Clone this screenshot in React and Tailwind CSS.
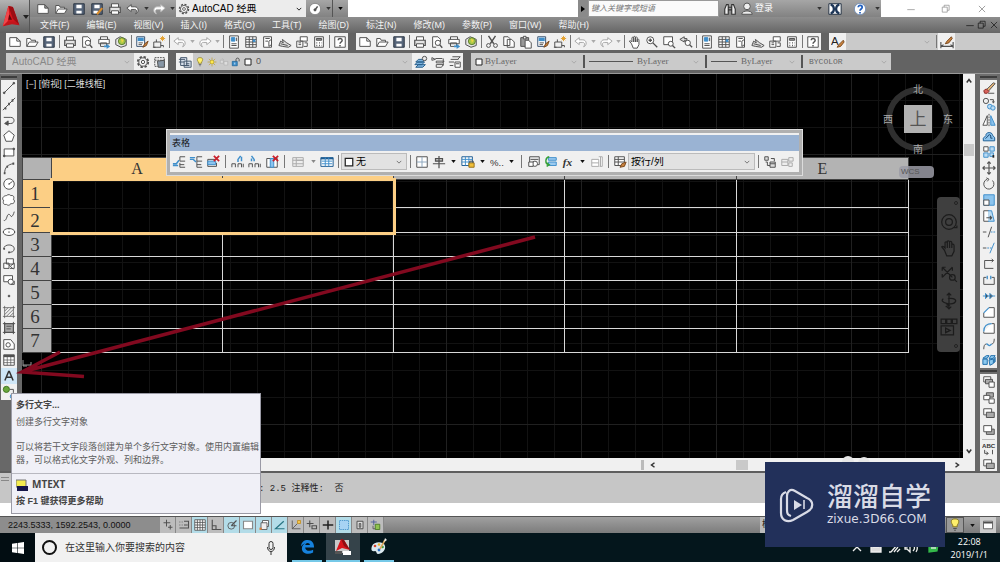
import React from 'react';

const B = '#3f8fcb';
const K = '#505050';

const ICONS = {
  new: <path d="M2 3h8l4 4v6H2zM10 3v4h4" fill="#fff" />,
  open: <path d="M2 13V4h4l1 2h5v2M2 13l3-5h10l-3 5z" fill="#fff" />,
  save: <><path d="M2 2h12v12H2z" fill="#56657a" stroke="#2b3442" /><path d="M5 3h6v4H5zM5 10h6v3H5z" fill="#fff" stroke="none" /></>,
  saveAs: <><path d="M2 2h12v12H2z" fill="#56657a" stroke="#2b3442" /><path d="M5 3h6v4H5zM4 10h5v3H4z" fill="#fff" stroke="none" /><path d="M8 14l6-7" stroke="#d98c2b" strokeWidth="2.4" /></>,
  print: <><path d="M4 6V2h8v4" fill="#fff" /><path d="M2 6h12v6H2z" fill="#e4e4e4" strokeWidth="1.4" /><path d="M4 10h8v4H4z" fill="#fff" /></>,
  preview: <><path d="M3 14V2h6l3 3v3M3 14h4" fill="#fff" /><circle cx="9" cy="9" r="3" /><path d="M11 11l3 3.500" strokeWidth="1.600" /></>,
  publish: <><path d="M4 5V2h8v3M2 5h12v5H2zM4 9h7v4H4z" fill="#fff" /><path d="M8 12h3v-2l4 3-4 3v-2H8z" fill={B} stroke="none" /></>,
  globe: <><path d="M2 5l5-3 7 3v7l-6 2-6-3z" fill="#e5e5e5" /><circle cx="9" cy="7" r="4" fill="#a9c94a" stroke="#5a7a30" /><path d="M8 4l3 2-2 3z" fill="#f4d642" stroke="none" /></>,
  match: <><path d="M2 2h9v11H2z" fill="#fff" stroke="#37506e" /><path d="M3 3h7v4H3z" fill={B} stroke="none" /><path d="M4 9h5M4 11h4" /><path d="M9 14l2-4 4-3-2 5z" fill="#c9823d" stroke="#7b4a1f" /></>,
  block: <><path d="M2 8h8v6H2zM5 8V5M1 14h3M10 12h3v2" /><path d="M12 1v6M9 4h6M10 2l4 4M14 2l-4 4" stroke="#e3a02f" /></>,
  undo: <path d="M1 7l5-4v2.500h4c5 0 5 7 1 8 2-3 1-5-1-5H6V11z" fill="#fff" />,
  redo: <path d="M15 7l-5-4v2.500H6c-5 0-5 7-1 8-2-3-1-5 1-5h4V11z" fill="#fff" />,
  props: <><path d="M3 1h10v14H3z" fill="#fff" /><path d="M5 3h4v4H5z" fill={B} stroke={B} /><path d="M5 10h6M5 12h6M11 3v4" /></>,
  center: <><path d="M2 2h12v12H2z" fill="#fff" /><path d="M2 5h12M6 2v12M10 2v12M2 8h12M2 11h12" /><path d="M10 5h3v3h-3z" fill={B} stroke="none" /></>,
  palette: <><path d="M3 2h9v12H3z" fill="#fff" /><path d="M5 4h5M5 7h3M9 7l3-2v6l-3 2z" /></>,
  sheet: <path d="M1 12l2-5 3 2-1-4 5 4 5 3-3 2-7-1zM3 10l8 2" fill="#ddd" />,
  markup: <path d="M6 2h8v5H6zM2 7h7v7H2zM11 9h3v4h-4M4 9h3M4 11h3" fill="#fff" />,
  calc: <><path d="M3 2h10v12H3z" fill="#fff" /><path d="M5 4h6v2H5z" fill="#999" /><path d="M5 9h1M8 9h1M11 9h.5M5 12h1M8 12h1M11 12h.5" strokeWidth="1.500" /></>,
  help: <><path d="M2 2h12v12H2z" fill="#fff" /><path d="M6 6c0-3 4.500-2.500 4.500 0C10.500 8 8 8 8 10M8 11.500v1.500" strokeWidth="1.600" /></>,
  cut: <><path d="M4 1l6 9M12 1L6 10" strokeWidth="1.600" /><circle cx="4" cy="12" r="2.200" /><circle cx="12" cy="12" r="2.200" /></>,
  copy: <path d="M2 2h5l2 2v8H2zM6 5h5l3 3v6H6z" fill="#fff" />,
  paste: <><path d="M2 3h9v10H2z" fill="#999" /><path d="M5 1.500h3v3H5z" fill="#eee" /><path d="M7 6h4l3 3v6H7z" fill="#fff" /></>,
  hand: <path d="M4 10L1.500 7c1-1 2 0 3 1V3c1-1 2 0 2 1v4-6c1-1 2 0 2 1v5-5.500c1-1 2 0 2 1V8 5c1-1 2 0 2 1v5l-2 4H6z" fill="#fff" />,
  navHand: <path d="M4 10L1.500 7c1-1 2 0 3 1V3c1-1 2 0 2 1v4-6c1-1 2 0 2 1v5-5.500c1-1 2 0 2 1V8 5c1-1 2 0 2 1v5l-2 4H6z" />,
  zoomRt: <><circle cx="6" cy="6" r="4" fill="#fff" /><path d="M9 9l5 5M4 6h4M6 4v4" strokeWidth="1.500" /></>,
  zoomWin: <><path d="M2 2h10v9H2z" fill="#fff" /><circle cx="10" cy="10" r="2.800" fill="#fff" /><path d="M12 12l3 3" strokeWidth="1.600" /></>,
  zoomPrev: <><path d="M6 2L1 5l5 3V6h3V4H6z" fill="#ddd" /><circle cx="10" cy="9" r="3" fill="#fff" /><path d="M12 11l3 3" strokeWidth="1.600" /></>,
  gear: <><circle cx="8" cy="8" r="6" strokeWidth="2" strokeDasharray="2.700 2" /><circle cx="8" cy="8" r="4.800" fill="#f4f4f4" /><circle cx="8" cy="8" r="1.900" /></>,
  wsave: <><path d="M2 3h11v10H2zM2 6h11" strokeDasharray="2 1" /><path d="M5 7l8-1v8H6z" fill="#8796a5" /></>,
  layers: <path d="M3 3h7v9H3zM7 7h8v7H7zM1 5h7M1 8h6M9 10h4M9 12h4" fill="#d6dfea" stroke="#44566b" />,
  bulb: <><path d="M8 1c-6 0-4.500 5-2.500 7v2h5V8C12.500 6 14 1 8 1z" fill="#fff06b" stroke="#8a7a1d" /><path d="M6 12h4M7 14h2" /></>,
  sun: <><circle cx="8" cy="8" r="3.300" fill="#ffe94f" stroke="#a58a13" /><path d="M8 1v2M8 13v2M1 8h2M13 8h2M3 3l1.500 1.500M11.500 11.500L13 13M13 3l-1.500 1.500M4.500 11.500L3 13" stroke="#bd9513" /></>,
  freeze: <path d="M2 5h5v5H2zM8 7h6v6H8zM5 2l3 3" stroke="#b0b0b0" fill="#ddd" />,
  lock: <><path d="M2 7h8v7H2z" fill={B} stroke="#185e94" /><path d="M8 7V4c0-3 5-3 5 0v3" strokeWidth="1.500" /><path d="M6 9v3" stroke="#fff" /></>,
  square: <path d="M2 2h12v12H2z" fill="#fff" stroke="#222" strokeWidth="2" />,
  layMake: <><path d="M1 11l3-3h8l-3 3zM2 14l3-3h8l-3 3zM2 8l3-3h8l-3 3z" fill="#7db4df" stroke="#275e8a" /><circle cx="12" cy="4" r="2.500" fill="#e9e9e9" /></>,
  layPrev: <path d="M1 3l4 2-4 1zM5 4h8M6 7h9l-2 2H6zM6 11h8l-2 3H6zM14 4v8" fill="#fff" />,
  layState: <path d="M5 2h9M3 5h9M1 8h6M2 12h4M8 8h6v6H8zM9 10h4M14 2l-3 3" fill="#fff" />,
  tstyle: <><text x="0" y="11" fontSize="13" fill="#222" stroke="none" fontFamily="Liberation Sans">A</text><path d="M7 14l2-3 5-5 1 2-4 5z" fill="#c9823d" stroke="#7b4a1f" /></>,
  dimstyle: <><path d="M1 8v7M15 8v7M1 13h14M1 13l3-2M15 13l-3-2" strokeWidth="1.300" /><path d="M6 10l2-3 5-5 1 2-4 5z" fill="#c9823d" stroke="#7b4a1f" /></>,
  line: <><path d="M2.500 13.500l11-11" /><circle cx="2.500" cy="13.500" r="1" fill={K} /><circle cx="13.500" cy="2.500" r="1" fill={K} /></>,
  xline: <><path d="M1 15L15 1" /><path d="M3 13h2M7 8h2M11 4h2" strokeWidth="2.600" /></>,
  pline: <><path d="M2 5h8c5 0 5 7 0 7H6" /><path d="M7 9l-4 3 4 2z" fill={K} /></>,
  polygon: <path d="M8 2l6 5-2.500 7h-7L2 7z" fill="#fff" />,
  rect: <><path d="M2.500 4.500h11v8h-11z" fill="#fff" /><circle cx="2.500" cy="12.500" r="1" fill={K} /><circle cx="13.500" cy="4.500" r="1" fill={K} /></>,
  arc: <><path d="M3 14C3 7 7 4 13 3" /><path d="M2 14h2M5 6.500h2M12 3h2" strokeWidth="2.400" /></>,
  circle: <><circle cx="8" cy="8" r="6" fill="#fff" /><path d="M8 8l4-3M7 8h2" /></>,
  cloud: <path d="M5 3c2-2 5-1 5 0 4-1 4 3 3 4 3 3 0 6-3 5-1 3-4 2-5 1-4 1-4-3-3-4-3-3 0-6 3-6z" fill="#fff" />,
  spline: <path d="M2 13c2 1 3-2 4-5s3-2 4 0 3-1 4-5" />,
  ellipse: <><ellipse cx="8" cy="8" rx="6.500" ry="4" fill="#fff" /><path d="M7.500 4h1M7.500 8h1M14 8h1M1 8h1" strokeWidth="2" /></>,
  ellArc: <><path d="M2 9c0-6 12-6 12 0 0 3-3 4-6 4" /><path d="M7 13h2M1.500 9h2" strokeWidth="2" /></>,
  insert: <path d="M5 2h8v6H5zM2 7h6v6H2zM10 10l4-3v6h-5M8 9l5 5" fill="#fff" />,
  mkBlock: <><path d="M2 3h10v7H2z" fill="#fff" /><circle cx="10" cy="10" r="3" fill="#fff" /><path d="M10 13h4V9" /></>,
  point: <circle cx="8" cy="8" r="1" fill={K} />,
  hatch: <path d="M3 1v14M13 1v14M1 3h14M1 13h14M3 7l4-4M3 11l8-8M5 13l8-8M9 13l4-4" strokeWidth=".8" />,
  gradient: <><path d="M3 3h10v10H3z" fill="#aaa" /><path d="M3 1v14M13 1v14M1 3h14M1 13h14M5 6h6M5 9h5" /></>,
  region: <><path d="M2 3h8l4 5v6H2z" fill="#fff" /><circle cx="7" cy="9" r="2.500" /></>,
  table: <><path d="M2 2h12v12H2z" fill="#fff" /><path d="M2 3.500h12" strokeWidth="2.500" /><path d="M6 4v10M10 4v10M2 8h12M2 11h12" strokeWidth=".8" /></>,
  mtext: <path d="M2.500 14L7.500 2h1l5 12M4.500 9.500h7" stroke="#333" strokeWidth="2" />,
  addSel: <><circle cx="5" cy="5" r="3.500" fill="#69a83b" stroke="#3f7420" /><circle cx="12" cy="13" r="2.500" fill="#8cb7e6" stroke={B} /><path d="M9 5h4v4" /></>,
  erase: <><path d="M4 11l9-9 2 1-8 9z" fill="#e9b778" /><path d="M2 11l3-2 3 3-2 2H3z" fill="#d9635c" stroke="#8d2d28" /><path d="M7 14h7" /></>,
  copyObj: <><circle cx="4.500" cy="4.500" r="3" /><path d="M9 3h4v3M12 5l1 2 1-2" /><circle cx="9" cy="11" r="2.700" fill="#bcdcf3" stroke={B} /><circle cx="12.500" cy="12.500" r="2.500" fill="#bcdcf3" stroke={B} /></>,
  mirror: <><path d="M6 3v11H1z" fill="#fff" /><path d="M10 3v11h5z" fill="#8cc4ee" stroke={B} /><path d="M8 1v14" strokeDasharray="2 1" /></>,
  offset: <><path d="M1.500 13.500v-3l3-3C4 3 12 3 12 7l2.500 3v3.500z" fill="#8cc4ee" stroke="#1c5d94" /><path d="M4 11l3-3c0-2 3-2 3 0v2.500h2" stroke="#1c4a74" /></>,
  array: <><path d="M2 2h5v5H2z" fill="#fff" /><path d="M9 2h5v5H9zM2 9h5v5H2zM9 9h4v4H9z" fill="#bcdcf3" stroke={B} /><path d="M12 13h2" stroke="#222" strokeWidth="3" /></>,
  move: <path d="M8 1v14M1 8h14M6 3l2-2 2 2M6 13l2 2 2-2M3 6L1 8l2 2M13 6l2 2-2 2" strokeWidth="1.300" />,
  rotate: <><path d="M12 4a5.800 5.800 0 1 1-6-1.500" /><path d="M5 1l3 1.500L6 5" /></>,
  scale: <><path d="M2 2h12v12H2z" fill="#8cc4ee" stroke={B} /><path d="M2 8h6v6H2z" fill="#fff" /></>,
  stretch: <><path d="M2 2h6v12H2z" fill="#fff" /><path d="M7 2h4l3 12H7" fill="#bcdcf3" stroke={B} /><path d="M5 10h6M9 8l2 2-2 2" strokeWidth="1.300" /></>,
  trim: <><path d="M1 8h4M7 14l4-12" /><path d="M10 8h5" stroke={B} strokeDasharray="2 1" /></>,
  extend: <><path d="M1 8h4" /><path d="M6 8h5" stroke={B} strokeDasharray="2 1" /><path d="M9 14l5-12" stroke={B} /></>,
  breakPt: <path d="M13 13H3V4h10M11 2l2 2-2 2" />,
  brk: <><path d="M2 5h3M11 5h3v8H2V5" /><path d="M6 3v4M10 3v4" stroke={B} strokeWidth="1.500" /></>,
  join: <><path d="M1 8h14" stroke={B} /><path d="M4 5l3 3-3 3zM9 5l3 3-3 3z" fill={K} stroke={B} /></>,
  chamfer: <><path d="M2 9v5h12V3H8" fill="#fff" /><path d="M2 9l6-6" stroke={B} strokeWidth="1.500" /></>,
  fillet: <><path d="M2 12v2h12V3h-3" fill="#fff" /><path d="M2 12c0-6 4-9 9-9" stroke={B} strokeWidth="1.500" /></>,
  blend: <><path d="M2 14c0-4 1-6 3-6M11 8c2 0 3-2 3-6" /><path d="M5 8c3 0 2 4 6 0" stroke={B} strokeWidth="1.500" /></>,
  explode: <path d="M1 6l4-3h3l-2 3zM1 7h5v6H1zM8 7l2-4h5l-2 3zM8 8l5-1v5l-4 2zM14 6l1-1v5l-1 1z" fill="#8cc9ef" stroke="#1d6dab" />,
  order1: <><path d="M2 2h8v6H2z" fill="#fff" /><path d="M4 5h8v5H4z" fill="#aaa" /><path d="M8 8h6v6H8z" fill="#fff" /></>,
  order2: <><path d="M5 2h8v5H5z" fill="#aaa" /><path d="M2 5h7v5H2z" fill="#fff" /><path d="M8 9h6v5H8z" fill="#fff" /></>,
  order3: <><path d="M2 2h9v7H2z" fill="#fff" /><path d="M5 6h9v6H5z" fill="#aaa" /></>,
  order4: <><path d="M5 7h9v6H5z" fill="#aaa" /><path d="M2 3h9v7H2z" fill="#fff" /></>,
  abc: <><text x="0" y="7" fontSize="7" fontWeight="bold" fill="#333" stroke="none" fontFamily="Liberation Sans">ABC</text><path d="M3 9v4h4M12 9v5M5 11l2 2-2 2" /></>,
  rowAbove: <><path d="M9 2h6M9 7h6M9 14h6M9 2v5M9 9v5M9 11h5" /><path d="M1 10h4l3-4M1 12h6" stroke={B} strokeWidth="1.700" /></>,
  rowBelow: <><path d="M9 2h6M9 7h6M9 14h6M9 2v12M9 11h5" /><path d="M1 5h4l3 3M1 3h6" stroke={B} strokeWidth="1.700" /></>,
  rowDel: <><path d="M2 5h9M2 13h10M2 5v8M12 9v4" /><path d="M2 7h9v4H2z" fill="#8cc4ee" stroke={B} /><path d="M9 1l6 6M15 1L9 7" stroke="#c8202b" strokeWidth="2" /></>,
  colLeft: <><path d="M1 14v-4h4v4M8 14v-4h4v4M14 10v4" /><path d="M8 8V5l3-4M12 2v5" stroke={B} strokeWidth="1.700" /></>,
  colRight: <><path d="M1 14v-4h4v4M8 14v-4h4v4M14 10v4" /><path d="M7 7V5L4 1M4 4v3" stroke={B} strokeWidth="1.700" /></>,
  colDel: <><path d="M2 4h12v10H2z" fill="#fff" /><path d="M6 4h4v10H6z" fill="#8cc4ee" stroke={B} /><path d="M9 1l6 6M15 1L9 7" stroke="#c8202b" strokeWidth="2" /></>,
  merge: <path d="M2 3h12v10H2zM2 6h12M2 10h12M6 3v10M6 6h8" fill="#eee" />,
  unmerge: <><path d="M1 3h14v10H1z" fill="#fff" stroke="#1d5c92" /><path d="M1 4h14" stroke="#1d5c92" strokeWidth="2" /><path d="M6 3v10M10 3v10M2 7h12M2 10h12" stroke={B} /></>,
  borders: <><path d="M2 2h12v12H2z" fill="#fff" /><path d="M8 2v12M2 8h12" stroke="#8ba5bd" /></>,
  align: <path d="M1 10h14M8 1v14M4 4h8v3H4z" fill="#bbb" strokeWidth="1.400" />,
  locked: <><path d="M1 2h12v10H1z" fill="#fff" stroke="#1d5c92" /><path d="M1 5h12M5 2v10M9 2v10M1 8h12" stroke={B} /><path d="M9 9h6v5H9z" fill="#f1bf38" stroke="#99711b" /><path d="M10 9V7h4v2" /></>,
  percent: <text x="0" y="12" fontSize="11" fill="#333" stroke="none" fontFamily="Liberation Sans">%..</text>,
  blockIn: <><path d="M3 9V2h11v9h-3M4 5h9" /><circle cx="9" cy="10" r="3" fill="#fff" /><path d="M2 8h5v5H2z" fill="#fff" /></>,
  field: <><path d="M5 3h9v3H5zM5 8h9v4H5z" fill="#9bcaf0" stroke={B} /><path d="M6 2C1 3 1 10 5 11M3 9l3 2-3 2" stroke="#35a037" strokeWidth="1.600" /></>,
  fx: <text x="2" y="12" fontSize="13" fontStyle="italic" fontWeight="bold" fill="#333" stroke="none" fontFamily="Liberation Serif">fx</text>,
  manage: <path d="M2 5h8v8H2zM2 9h8M12 2v11M10 2h4v11h-3" fill="#fff" />,
  tmatch: <><path d="M2 2h11v10H2zM2 5h11M6 2v10M2 8h11" fill="#fff" /><path d="M8 14l2-4 5-2-2 5z" fill="#c9823d" stroke="#7b4a1f" /></>,
  link: <path d="M2 2h4v4H2zM3 8h2v4h3M9 4h4v3M8 8h6v6H8zM8 10h6" fill="#ddd" />,
  dl: <path d="M2 5h7v7H2zM2 8h7M10 3h5v4h-5zM10 9h4v4h-4z" fill="#eee" />,
  infer: <path d="M6 1v9M2 5h9M8 11h6M11 8v6" strokeWidth="1.300" />,
  snap: <path d="M2 4h1M5 4h1M2 8h1M5 8h1M8 3h6v9H2M8 8h5" strokeWidth="1.400" />,
  grid: <><path d="M1 1h14v14H1z" fill="#fff" /><path d="M1 4.500h14M1 8h14M1 11.500h14M4.500 1v14M8 1v14M11.500 1v14" /></>,
  ortho: <path d="M3 1v13h12M3 9h5v5" strokeWidth="1.500" />,
  polar: <><circle cx="7" cy="9" r="4.500" /><path d="M7 9l7-7M7 9h7" strokeWidth="1.500" /></>,
  osnap: <path d="M2 3h12v10H2z" fill="#fff" stroke="#888" strokeWidth="1.500" />,
  osnap3: <><path d="M6 2h8v8H6z" fill="#fff" /><path d="M4 5h8v9H4z" fill="#eee" /><path d="M2 13h3" stroke="#d87b34" strokeWidth="3" /></>,
  otrack: <path d="M13 3L2 13h12" stroke="#277482" strokeWidth="1.600" />,
  ducs: <><path d="M3 2v11h11M3 13l7-7" /><path d="M10 2h4v4h-4z" fill="#f2c64b" stroke="#c48e1e" /></>,
  dyn: <path d="M5 2v9M1 6h9M8 9h6v4H8z" strokeWidth="1.500" />,
  lwt: <path d="M8 2v12M1 8h14" stroke="#222" strokeWidth="2" />,
  tpy: <path d="M2 2h12v12H2z" fill="#a7d3f4" stroke={B} strokeDasharray="2 1" />,
  qp: <path d="M4 3h8v10H4zM7 6h2v5H7z" fill="#ddd" strokeWidth="1.300" />,
  sc: <><path d="M5 1v7M1 4h8" stroke="#45529b" /><path d="M7 7h6v7H7z" fill="#8fc250" stroke="#467720" /><path d="M4 9v4h3" /></>,
  binoc: <path d="M2 14V8l2-5h2v11zM10 14V3h2l2 5v6zM6 6h4M6 9h4" fill="#eee" stroke="#333" strokeWidth="1.300" />,
  user: <><circle cx="8" cy="5" r="3.800" fill="#eee" /><path d="M2 14c0-5 12-5 12 0z" fill="#eee" /></>,
  exch: <><path d="M1 2h14v12H1z" fill="#fff" stroke="#1e2d3f" /><path d="M3 3c5 1 5 9 0 10M13 3c-5 1-5 9 0 10" stroke="#1c3557" strokeWidth="2.600" /></>,
  qhelp: <><circle cx="8" cy="8" r="6.500" fill="#fff" stroke="#7791b5" /><path d="M6 6c0-3 4.500-2.500 4.500 0C10.500 8 8 8 8 10M8 11.500v1.500" stroke="#1f5fc0" strokeWidth="2" /></>,
  gauge: <><circle cx="8" cy="8" r="6.500" fill="#fff" stroke="#888" /><path d="M8 9l3-4" strokeWidth="1.700" /><circle cx="8" cy="9" r="1.200" fill={K} /></>,
  min: <path d="M2 9h12" />,
  max: <path d="M2 5h8v8H2zM5 5V2h8v8h-3" />,
  close: <path d="M3 3l10 10M13 3L3 13" />,
  wheel: <><circle cx="8" cy="8" r="6.500" /><circle cx="8" cy="8" r="3" /><path d="M12 13h3v-2" /></>,
  zoomAll: <><path d="M2 2l9 9M11 2L2 11M2 2h3M2 2v3M11 2v3M2 11v-3" /><circle cx="11" cy="11" r="2.500" /><path d="M13 13l2 2" /></>,
  orbit: <path d="M8 1v14M6 3l2-2 2 2M6 13l2 2 2-2M3 6c-5 3 9 7 11 2 0-2-4-3-7-2M5 10l3 2-3 1" />,
  motion: <path d="M1 1h4v4H1zM6 1h4v4H6zM11 1h4v4h-4zM1 7h11v8H1zM5 9l4 2-4 2z" />,
  page: <><path d="M2 3h12v10H2z" fill="#fff" /><path d="M2 5h12" strokeWidth="2" /></>,
};

function Icon({ n, size = 'size-3.5', color = K }) {
  return (
    <svg viewBox="0 0 16 16" className={`${size} shrink-0`} fill="none" stroke={color} strokeWidth="1.1" aria-hidden="true">
      {ICONS[n]}
    </svg>
  );
}

function Tool({ n, label, className = 'w-[17px]', size, color }) {
  return (
    <button type="button" aria-label={label || n} className={`flex shrink-0 items-center justify-center ${className}`}>
      <Icon n={n} size={size} color={color} />
    </button>
  );
}

function Drop({ className = 'w-2', color = '#333' }) {
  return (
    <button type="button" aria-label="展开" className={`flex shrink-0 items-center justify-center ${className}`}>
      <svg viewBox="0 0 6 4" className="h-[3px] w-[5px]" fill={color} aria-hidden="true"><path d="M0 0h6L3 4z" /></svg>
    </button>
  );
}

function Sep({ className = 'w-1' }) {
  return <span className={`flex shrink-0 justify-center py-0.5 ${className}`}><span className="w-px bg-[#777]" /></span>;
}

function Chevron({ color = '#aaa' }) {
  return <svg viewBox="0 0 8 5" className="pointer-events-none mr-1 h-1 w-1.5 shrink-0" fill="none" stroke={color} strokeWidth="1.3" aria-hidden="true"><path d="M1 1l3 3 3-3" /></svg>;
}

function Combo({ label, value, className = '', text = '', before, chevron }) {
  return (
    <label className={`flex items-center ${className}`}>
      {before}
      <select aria-label={label} className={`min-w-0 flex-1 appearance-none bg-transparent outline-none ${text}`} defaultValue={value}>
        <option>{value}</option>
      </select>
      <Chevron color={chevron} />
    </label>
  );
}

const STANDARD_A = ['new', 'open', 'save', '|', 'print', 'preview', 'publish', 'globe', '|'];
const STANDARD_Z = ['|', 'props', 'center', 'palette', 'sheet', 'markup', 'calc', '|', 'help'];
const UNDO = ['undo', 'v', 'redo', 'v'];
const BAR_1 = [...STANDARD_A, 'match', 'block', '|', ...UNDO, ...STANDARD_Z];
const BAR_2 = [...STANDARD_A, 'cut', 'copy', 'paste', 'match', 'block', '|', ...UNDO, '|', 'hand', 'zoomRt', 'zoomWin', 'zoomPrev', ...STANDARD_Z];

function Bar({ items }) {
  return (
    <div role="toolbar" className="flex shrink-0 bg-[#f0f0f0]">
      {items.map((n, i) => {
        if (n === '|') return <Sep key={i} />;
        if (n === 'v') return <Drop key={i} color="#aaa" />;
        return <Tool key={i} n={n} color={n === 'undo' || n === 'redo' ? '#a5a5a5' : K} />;
      })}
    </div>
  );
}

const MENUS = ['文件(F)', '编辑(E)', '视图(V)', '插入(I)', '格式(O)', '工具(T)', '绘图(D)', '标注(N)', '修改(M)', '参数(P)', '窗口(W)', '帮助(H)'];

function Header() {
  return (
    <header className="flex h-[33px] shrink-0 bg-white">
      <button type="button" aria-label="应用程序菜单" className="flex w-[30px] shrink-0 items-center justify-center border-r border-[#555] bg-linear-to-b from-[#b4b4b4] to-[#5f5f5f]">
        <svg viewBox="0 0 24 28" className="h-[26px] w-[22px]" aria-hidden="true">
          <path d="M8 2l5 1 7 20-8-3-10 4z" fill="#d3151c" />
          <path d="M8 2l5 1 7 20-7-7z" fill="#9c0e14" />
          <path d="M8 2L2 24l5-4 2-9z" fill="#f0464a" />
          <path d="M2 24l5-5h8l5 4-8-1z" fill="#c3141b" />
          <path d="M9 11l3 6H8z" fill="#5e080c" />
        </svg>
        <svg viewBox="0 0 6 4" className="h-1 w-1.5" fill="#222" aria-hidden="true"><path d="M0 0h6L3 4z" /></svg>
      </button>
      <div className="flex min-w-0 flex-1 flex-col">
        <div className="flex h-[17px] justify-between">
          <div className="flex shrink-0 bg-linear-to-b from-[#a6a6a6] to-[#828282] pl-1">
            {['new', 'open', 'save', 'saveAs', 'print', 'undo'].map((n) => <Tool key={n} n={n} className="w-[18px]" />)}
            <Drop />
            <Tool n="redo" color="#bbb" className="w-[18px]" />
            <Drop />
            <Combo label="工作空间" value="AutoCAD 经典" className="w-[130px] bg-[#ececec] pl-0.5" text="pl-0.5 text-[10px] leading-none text-black" before={<Icon n="gear" size="size-3" />} chevron="#222" />
            <Tool n="gauge" className="w-[18px]" />
            <Drop />
            <Drop className="w-4 border-l border-[#555]" color="#000" />
          </div>
          <div className="flex min-w-0">
            <button type="button" aria-label="展开搜索" className="flex w-2.5 items-center justify-center bg-[#8a8a8a]">
              <svg viewBox="0 0 4 6" className="h-1.5 w-1" aria-hidden="true"><path d="M0 0l4 3-4 3z" /></svg>
            </button>
            <input aria-label="搜索" placeholder="键入关键字或短语" className="w-[131px] border border-[#999] bg-[#fafafa] px-0.5 text-[8px] italic outline-none placeholder:text-[#777]" />
            <div className="flex w-[162px] items-center bg-linear-to-b from-[#a6a6a6] to-[#828282] pl-0.5">
              <Tool n="binoc" />
              <Tool n="user" />
              <button type="button" className="text-[9px] text-white">登录</button>
              <span className="flex-1" />
              <Drop />
              <Tool n="exch" className="w-6" />
              <Tool n="qhelp" className="w-[26px]" />
              <Drop />
            </div>
            <div className="flex w-[119px] items-center justify-around pl-3">
              <Tool n="min" label="最小化" size="size-2.5" color="#888" />
              <Tool n="max" label="还原" size="size-2.5" color="#888" />
              <Tool n="close" label="关闭" size="size-2.5" color="#777" />
            </div>
          </div>
        </div>
        <nav className="flex h-4 items-center bg-linear-to-b from-[#8d8d8d] to-[#666] pl-2.5">
          <div className="flex flex-1 gap-[17px]">
            {MENUS.map((m) => <button key={m} type="button" className="text-[9px] leading-none whitespace-nowrap text-[#f2f2f2]">{m}</button>)}
          </div>
          <Tool n="min" label="最小化图形" size="size-2.5" color="#111" className="w-3" />
          <Tool n="max" label="还原图形" size="size-2.5" color="#111" className="w-3" />
          <Tool n="close" label="关闭图形" size="size-2.5" color="#111" className="w-3" />
        </nav>
      </div>
    </header>
  );
}

function Toolbars() {
  const by = 'font-["Liberation_Serif",serif] text-[9px] text-[#666]';
  const sep = <span className="flex w-1.5 shrink-0 justify-center bg-[#cacaca] py-0.5"><span className="w-0.5 bg-[#555]" /></span>;
  return (
    <div className="shrink-0 bg-[#636363]">
      <div className="flex h-[17px] gap-2 pl-1.5">
        <Bar items={BAR_1} />
        <Bar items={BAR_2} />
        <div role="toolbar" className="flex flex-1 bg-[#cacaca]">
          <Tool n="tstyle" label="文字样式" className="w-[17px] bg-[#f0f0f0]" />
          <Combo label="文字样式列表" value=" " className="w-[88px]" />
          <Sep />
          <Tool n="dimstyle" label="标注样式" className="w-[17px] bg-[#f0f0f0]" />
        </div>
      </div>
      <div className="mt-[3px] flex h-[17px] gap-2 pl-1.5">
        <div className="flex bg-[#cacaca]">
          <Combo label="工作空间" value="AutoCAD 经典" className="w-[128px] pl-1.5" text="text-[10px] leading-none text-[#888]" />
          <Tool n="gear" label="工作空间设置" className="w-[17px] bg-[#f0f0f0]" />
          <Tool n="wsave" label="保存工作空间" className="w-[17px] bg-[#f0f0f0]" />
        </div>
        <div className="flex bg-[#cacaca]">
          <Tool n="layers" label="图层特性" className="w-[17px] bg-[#f0f0f0]" />
          <Combo
            label="图层"
            value="0"
            className="w-[219px] pl-px"
            text="pl-0.5 text-[9px] text-[#555]"
            before={['bulb', 'sun', 'freeze', 'lock', 'square'].map((n) => <Icon key={n} n={n} size={n === 'square' ? 'mx-0.5 size-2' : 'mx-px size-2.5'} />)}
          />
          {['layMake', 'layPrev', 'layState'].map((n) => <Tool key={n} n={n} className="w-[17px] bg-[#f0f0f0]" />)}
        </div>
        <div className="flex bg-[#cacaca]">
          <Combo label="颜色" value="ByLayer" className="w-[110px] pl-1" text={`pl-0.5 ${by}`} before={<Icon n="square" size="size-2" />} />
          {sep}
          <Combo label="线型" value="ByLayer" className="w-[116px] pl-0.5" text={`pl-1 ${by}`} before={<span className="h-px w-11 bg-[#555]" />} />
          {sep}
          <Combo label="线宽" value="ByLayer" className="w-[90px] pl-0.5" text={`pl-1 ${by}`} before={<span className="h-px w-[26px] bg-[#555]" />} />
          {sep}
          <Combo label="打印样式" value="BYCOLOR" className="w-[86px] pl-1" text='font-["Liberation_Mono",monospace] text-[8px] text-[#666]' />
        </div>
      </div>
      <div className="h-1 border-b border-[#999]" />
    </div>
  );
}

const DRAW = ['line', 'xline', 'pline', 'polygon', 'rect', 'arc', 'circle', 'cloud', 'spline', 'ellipse', 'ellArc', 'insert', 'mkBlock', 'point', 'hatch', 'gradient', 'region', 'table', 'mtext', 'addSel'];
const MODIFY = ['erase', 'copyObj', 'mirror', 'offset', 'array', 'move', 'rotate', 'scale', 'stretch', 'trim', 'extend', 'breakPt', 'brk', 'join', 'chamfer', 'fillet', 'blend', 'explode'];

function Grip() {
  return <span className="h-1.5 shrink-0 border-y-2 border-[#6e6e6e] bg-[#3c3c3c]" />;
}

const cell = 'border border-[#d8d8d8]';
const th = 'border border-[#444] font-["Liberation_Serif","Noto_Serif",serif] font-normal leading-none text-[#333]';

function Sheet() {
  return (
    <table className="absolute top-[83px] left-0 w-[886px] table-fixed border-collapse text-center">
      <colgroup>
        <col className="w-[29px]" />
        <col className="w-[171px]" /><col className="w-[171px]" /><col className="w-[171px]" /><col className="w-[172px]" /><col className="w-[172px]" />
      </colgroup>
      <thead>
        <tr className="h-[22px] text-[16px]">
          <th className={`${th} bg-[#b3b3b3]`} />
          <th className={`${th} bg-[#fccf85]`}>A</th>
          <th className={`${th} bg-[#fccf85]`}>B</th>
          <th className={`${th} bg-[#b3b3b3]`}>C</th>
          <th className={`${th} bg-[#b3b3b3]`}>D</th>
          <th className={`${th} bg-[#b3b3b3]`}>E</th>
        </tr>
      </thead>
      <tbody className="text-[19px]">
        <tr className="h-7">
          <th className={`${th} bg-[#fccf85] pr-1`}>1</th>
          <td colSpan={2} rowSpan={2} className={`${cell} outline-3 -outline-offset-1 outline-[#fccf85]`} />
          <td className={cell} /><td className={cell} /><td className={cell} />
        </tr>
        <tr className="h-[25px]">
          <th className={`${th} bg-[#fccf85] pr-1`}>2</th>
          <td className={cell} /><td className={cell} /><td className={cell} />
        </tr>
        {[3, 4, 5, 6, 7].map((r) => (
          <tr key={r} className="h-6">
            <th className={`${th} bg-[#b3b3b3] pr-1`}>{r}</th>
            <td className={cell} /><td className={cell} /><td className={cell} /><td className={cell} /><td className={cell} />
          </tr>
        ))}
      </tbody>
    </table>
  );
}

function TableBar() {
  const s = <Sep className="w-2" />;
  const t = <Sep className="w-1.5" />;
  const d = <Drop className="w-3" color="#111" />;
  return (
    <section aria-label="表格" className="absolute top-[55px] left-[144px] w-[637px] border-4 border-[#b0b0b0] bg-[#f0f0f0] outline-1 -outline-offset-1 outline-[#dcdcdc]">
      <h2 className="mt-0.5 h-4 bg-[#9ab3d3] px-0.5 text-[9px] leading-4 text-[#111]">表格</h2>
      <div role="toolbar" className="flex h-[21px] py-0.5">
        {['rowAbove', 'rowBelow', 'rowDel'].map((n) => <Tool key={n} n={n} />)}
        {s}
        {['colLeft', 'colRight', 'colDel'].map((n) => <Tool key={n} n={n} />)}
        {s}
        <Tool n="merge" color="#aaa" className="w-5" />
        <Drop className="w-2.5" color="#888" />
        <Tool n="unmerge" />
        {t}
        <Combo label="背景填充" value="无" className="w-[66px] border border-[#bbb] bg-[#e2e2e2] pl-0.5" text="pl-0.5 text-[10px] leading-none" before={<Icon n="square" size="size-2.5" />} chevron="#777" />
        {t}
        <Tool n="borders" /><Tool n="align" />{d}
        <Tool n="locked" />{d}
        <Tool n="percent" />{d}
        {s}
        <Tool n="blockIn" /><Tool n="field" /><Tool n="fx" />{d}
        <Tool n="manage" color="#aaa" />
        {t}
        <Tool n="tmatch" />
        <Combo label="单元边框" value="按行/列" className="min-w-0 flex-1 border border-[#bbb] bg-[#e2e2e2]" text="pl-0.5 text-[10px] leading-none" chevron="#777" />
        {t}
        <Tool n="link" />
        <Tool n="dl" color="#aaa" className="mr-1 w-[17px]" />
      </div>
    </section>
  );
}

function ViewCube() {
  return (
    <div className="absolute top-1 right-2 w-[76px] text-[11px] text-[#aaa]">
      <svg viewBox="0 0 76 82" className="w-full" aria-hidden="true">
        <circle cx="39" cy="41" r="29" fill="none" stroke="#2f2f2f" strokeWidth="6" />
        <path d="M25 27h28v28H25z" fill="#b2b2b2" />
        <g fill="#a8a8a8" fontSize="10" textAnchor="middle" fontFamily="Noto Sans CJK SC">
          <text x="39" y="15">北</text><text x="39" y="75">南</text><text x="9" y="45">西</text><text x="69" y="45">东</text>
        </g>
        <text x="39" y="47" fontSize="17" fill="#555" textAnchor="middle" fontFamily="Noto Sans CJK SC">上</text>
      </svg>
      <button type="button" className="mt-1.5 ml-5 flex h-3 w-[35px] items-center rounded-sm bg-[#9b9ba6]/85 pl-0.5 text-[8px] text-[#555]">WCS</button>
    </div>
  );
}

function NavBar() {
  return (
    <div className="absolute top-[123px] right-[3px] flex h-[155px] w-[23px] flex-col items-center justify-between rounded-sm bg-[#3f3f3f] py-1">
      <span className="mr-0.5 size-1 self-end rounded-full border border-[#222]" />
      {['wheel', 'navHand', 'zoomAll', 'orbit', 'motion'].map((n) => <Tool key={n} n={n} size="size-[18px]" color="#1c1c1c" className="w-full" />)}
      <span className="mr-0.5 size-1 self-end rounded-full border border-[#222]" />
    </div>
  );
}

function Canvas() {
  return (
    <div className="relative min-h-0 flex-1 overflow-hidden bg-black">
      <svg className="absolute inset-0 size-full" aria-hidden="true">
        <defs>
          <pattern id="minor" x="19" y="26" width="27" height="27" patternUnits="userSpaceOnUse"><path d="M.5 0v27M0 .5h27" stroke="#121212" /></pattern>
          <pattern id="major" x="19" y="80" width="135" height="135" patternUnits="userSpaceOnUse"><path d="M.5 0v135M0 .5h135" stroke="#202020" /></pattern>
        </defs>
        <rect width="100%" height="100%" fill="url(#minor)" />
        <rect width="100%" height="100%" fill="url(#major)" />
        <path d="M1 286v6h4M1 291h8M9 288v6M13 291h2" stroke="#999" fill="none" />
      </svg>
      <p className="absolute top-1 left-1 text-[9px] leading-3 text-[#ddd]">[−] [俯视] [二维线框]</p>
      <Sheet />
      <TableBar />
      <ViewCube />
      <NavBar />
    </div>
  );
}

function Arrowhead({ d, className = '' }) {
  return <svg viewBox="0 0 8 8" className={`size-1.5 ${className}`} fill="none" stroke="#333" strokeWidth="2" aria-hidden="true"><path d={d} /></svg>;
}

function Workspace() {
  return (
    <main className="flex min-h-0 flex-1 bg-[#686868]">
      <div role="toolbar" aria-label="绘图" className="ml-px flex w-4 shrink-0 flex-col self-start bg-[#f0f0f0]">
        <Grip />
        {DRAW.map((n) => (
          <Tool key={n} n={n} size={n === 'mtext' ? 'size-3' : 'size-3.5'} className={n === 'mtext' ? 'h-4 w-full bg-[#cfe6f6]' : 'h-4 w-full'} />
        ))}
      </div>
      <div className="relative ml-[5px] flex min-w-0 flex-1 flex-col">
        <div className="flex min-h-0 flex-1">
          <Canvas />
          <div className="flex w-3 shrink-0 flex-col items-center bg-[#f0f0f0] py-1">
            <Arrowhead d="M1 6l3-4 3 4" />
            <span className="mt-[60px] h-3 w-2.5 bg-[#c9c9c9]" />
            <span className="flex-1" />
            <Arrowhead d="M1 2l3 4 3-4" />
          </div>
        </div>
        <div className="flex h-[13px] shrink-0 items-center bg-[#f0f0f0]">
          <span className="flex-1" />
          <span className="h-2.5 w-[3px] bg-[#bbb]" />
          <div className="flex w-[319px] items-center pl-1.5">
            <Arrowhead d="M6 1L2 4l4 3" />
            <span className="ml-20 h-2.5 w-3 bg-[#c9c9c9]" />
            <span className="flex-1" />
            <Arrowhead d="M2 1l4 3-4 3" className="mr-[3px]" />
          </div>
          <span className="w-3 shrink-0" />
        </div>
        <svg viewBox="0 0 941 384" preserveAspectRatio="xMinYMin" className="pointer-events-none absolute top-0 left-0 z-10 w-[941px] overflow-visible" fill="none" aria-hidden="true">
          <path d="M513 163L0 298M38 278L0 298l62 4.500" stroke="#82091f" strokeWidth="3.500" />
          <circle cx="826" cy="388" r="6" fill="#e6e6e6" /><circle cx="842" cy="389" r="6" fill="#e6e6e6" />
        </svg>
      </div>
      <div role="toolbar" aria-label="修改" className="mr-[3px] ml-[5px] flex w-[17px] shrink-0 flex-col overflow-hidden bg-[#f0f0f0]">
        <Grip />
        {MODIFY.map((n) => <Tool key={n} n={n} className="h-4 w-full" />)}
        <Grip />
        {['order1', 'order2', 'order3', 'order4'].map((n) => <Tool key={n} n={n} className="h-4 w-full" />)}
        <span className="mx-0.5 my-px h-px shrink-0 bg-[#bbb]" />
        <Tool n="abc" className="h-4 w-full" />
        <Tool n="order3" className="h-4 w-full" />
      </div>
    </main>
  );
}

function Tooltip() {
  return (
    <div role="tooltip" className="absolute bottom-12 left-[11px] z-20 h-[121px] w-[250px] border border-[#9a9aa5] bg-[#f0f0f7] text-[9px] leading-[13px] text-[#5c5c5c]">
      <div className="px-1 pt-[5px]">
        <p className="font-bold text-[#444]">多行文字...</p>
        <p className="mt-1">创建多行文字对象</p>
        <p className="mt-3 whitespace-nowrap">可以将若干文字段落创建为单个多行文字对象。使用内置编辑<br />器，可以格式化文字外观、列和边界。</p>
      </div>
      <div className="mt-1.5 border-t border-[#b8b8c0] px-1 pt-1 font-bold text-[#444]">
        <p className="flex items-center gap-1 font-['Open_Sans',sans-serif] text-[10px]">
          <svg viewBox="0 0 12 12" className="size-3" aria-hidden="true"><path d="M0 1h10v7H0z" fill="#f5ec4e" stroke="#777" /><path d="M1 7h11v5H1z" fill="#16164a" /></svg>
          MTEXT
        </p>
        <p className="mt-1">按 F1 键获得更多帮助</p>
      </div>
    </div>
  );
}

const STATUS = ['infer', 'snap', 'grid', 'ortho', 'polar', 'osnap', 'osnap3', 'otrack', 'ducs', 'dyn', 'lwt', 'tpy', 'qp', 'sc'];
const ACTIVE = new Set(['grid', 'polar', 'osnap', 'osnap3', 'otrack', 'tpy']);

function CommandAndStatus() {
  return (
    <>
      <section aria-label="命令行" className="shrink-0 border-t-2 border-[#5e5e5e] bg-[#c6c6c6]">
        <div className="flex h-[30px] items-center pt-1">
          <span className="mx-px h-1 w-2 self-start border-y border-[#888]" />
          <p className="ml-[249px] font-['Liberation_Mono','Noto_Sans_CJK_SC',monospace] text-[9px] whitespace-pre text-[#222]">{': 2.5 注释性:  否'}</p>
        </div>
        <div className="flex h-[13px] bg-white pl-3">
          <input aria-label="命令" defaultValue="指定第一角点:" className="w-full bg-transparent text-[9px] text-[#333] outline-none" />
        </div>
      </section>
      <footer className="flex h-[17px] shrink-0 items-stretch border-t border-[#555] bg-linear-to-b from-[#a0a0a0] to-[#7c7c7c]">
        <p className="w-40 shrink-0 bg-[#8d8d8d] pl-2 text-[9px] leading-4 text-[#111]">2243.5333, 1592.2543, 0.0000</p>
        {STATUS.map((n) => (
          <Tool key={n} n={n} size="size-3" className={`w-4 border-r border-[#888] ${ACTIVE.has(n) ? 'bg-[#b3dce8]' : 'bg-[#bdbdbd]'}`} />
        ))}
        <span className="flex-1" />
        <button type="button" className="mr-[164px] bg-[#bbb] px-0.5 text-[9px] text-[#222]">模型</button>
        <Tool n="bulb" label="隔离对象" className="w-[18px] border border-[#555] bg-[#999]" />
        <Drop className="w-4" color="#111" />
        <Tool n="page" label="全屏显示" size="size-3" className="mr-1 w-4 bg-[#ccc]" />
      </footer>
    </>
  );
}

function Taskbar() {
  return (
    <div className="flex h-[29px] shrink-0 bg-[#04161c] text-white">
      <button type="button" aria-label="开始" className="flex w-[35px] shrink-0 items-center justify-center bg-[#020d12]">
        <svg viewBox="0 0 12 12" className="size-3" fill="#fff" aria-hidden="true"><path d="M0 1.700l5-.7v4.700H0zM5.600.9L12 0v5.700H5.600zM0 6.300h5V11l-5-.7zM5.600 6.300H12V12l-6.400-.9z" /></svg>
      </button>
      <label className="flex w-[252px] shrink-0 items-center bg-[#f1f1f1] pr-3 pl-[7px]">
        <span className="size-[15px] rounded-full border-2 border-[#111]" />
        <input aria-label="搜索" placeholder="在这里输入你要搜索的内容" className="min-w-0 flex-1 pl-2 text-[10px] outline-none placeholder:text-[#333]" />
        <svg viewBox="0 0 8 14" className="h-3.5 w-2" fill="none" stroke="#333" aria-hidden="true"><rect x="2" y=".5" width="4" height="8" rx="2" /><path d="M.5 6c0 6 7 6 7 0M4 10.500V14" /></svg>
      </label>
      <div className="flex gap-1 pl-[5px]">
        <button type="button" aria-label="Edge" className="flex w-[30px] items-center justify-center border-b-2 border-[#76c9e8]">
          <svg viewBox="0 0 16 16" className="size-[15px]" aria-hidden="true"><path d="M1 8C1.500 3 4.500 1 8.300 1 13 1 15 4.500 15 9H5.500c.3 4 5 4.500 8.500 2.500v3C8 17.500 2 15 2 10c0-3 2-4.700 4-5.200C3.500 5 2 6.500 1 8zm4.600-1.500h5C10.500 3.500 6 3.500 5.600 6.500z" fill="#1682dd" /></svg>
        </button>
        <button type="button" aria-label="AutoCAD" className="flex w-[34px] items-center justify-center border-b-2 border-[#76c9e8] bg-[#35434a]">
          <svg viewBox="0 0 18 18" className="size-[18px]" aria-hidden="true"><path d="M1 2h14v13H1z" fill="#c9c9c9" /><path d="M7 1l3 1 6 10-8-2-6 3z" fill="#d8141c" /><path d="M7 1l3 1 6 10-6-4z" fill="#900d12" /><path d="M9 13h8v4H9z" fill="#fff" /><path d="M1 13h7v3H1z" fill="#555" /></svg>
        </button>
        <button type="button" aria-label="画图" className="flex w-[30px] items-center justify-center border-b-2 border-[#76c9e8]">
          <svg viewBox="0 0 18 18" className="size-[18px]" aria-hidden="true"><path d="M2 8c2-5 12-5 13 0 1 4-3 8-7 8-2 0-1-3-3-3-4 1-4-2-3-5z" fill="#dbe9ef" /><circle cx="5" cy="8" r="1.300" fill="#d8432e" /><circle cx="9" cy="6.500" r="1.300" fill="#edb32d" /><circle cx="12.500" cy="9" r="1.300" fill="#3c9c42" /><circle cx="9" cy="12" r="1.400" fill="#2a6cc0" /><path d="M10 11l5-9" stroke="#d9a55a" strokeWidth="1.600" /><path d="M14 4l1-4 2 2z" fill="#eee" /></svg>
        </button>
      </div>
      <div className="ml-auto flex items-center gap-3 pr-3">
        <svg viewBox="0 0 90 12" className="h-3 w-[90px]" fill="none" stroke="#eee" strokeWidth="1.300" aria-hidden="true">
          <path d="M4 9l4-4 4 4" /><path d="M22 3h10v7H22zM24 5h6" fill="#ddd" /><path d="M42 10l6-7M45 10l4-5M48 10l3-3M40 10h2" /><path d="M56 5h2l3-3v8l-3-3h-2zM64 3c2 2 2 4 0 6M67 2c2 3 2 5 0 8" /><path d="M80 3l9-1-1 7-8 1z" fill="#34b84a" stroke="#34b84a" /><path d="M82 6h5" />
        </svg>
        <time className="text-center font-['Open_Sans',sans-serif] text-[9px] leading-[13px]">22:08<br />2019/1/1</time>
      </div>
    </div>
  );
}

function Badge() {
  return (
    <aside className="absolute right-[55px] bottom-[15px] z-30 flex h-[85px] w-[180px] items-center justify-center gap-3 bg-[#22305a] text-[#d9dbe6]">
      <svg viewBox="0 0 36 36" className="size-9 shrink-0" fill="none" stroke="currentColor" strokeWidth="2.200" aria-hidden="true">
        <path d="M7 5C4 6 2 8 2 12v14c0 7 6 10 12 7l14-8c7-4 7-11 0-14L16 4C11 1 8 5 8 9v14c0 4 1 5 4 6" />
        <path d="M15 13l8 5-8 5z" fill="currentColor" stroke="none" /><path d="M25 13v9" strokeWidth="1.600" />
      </svg>
      <div>
        <p className="text-[26px] leading-7 font-medium">溜溜自学</p>
        <p className="font-['DejaVu_Sans',sans-serif] text-[12px] leading-4">zixue.3D66.COM</p>
      </div>
    </aside>
  );
}

export default function App() {
  return (
    <div className="relative flex h-screen flex-col overflow-hidden bg-[#686868] font-['Liberation_Sans','Noto_Sans_CJK_SC',sans-serif]">
      <Header />
      <Toolbars />
      <Workspace />
      <CommandAndStatus />
      <Taskbar />
      <Tooltip />
      <Badge />
    </div>
  );
}
